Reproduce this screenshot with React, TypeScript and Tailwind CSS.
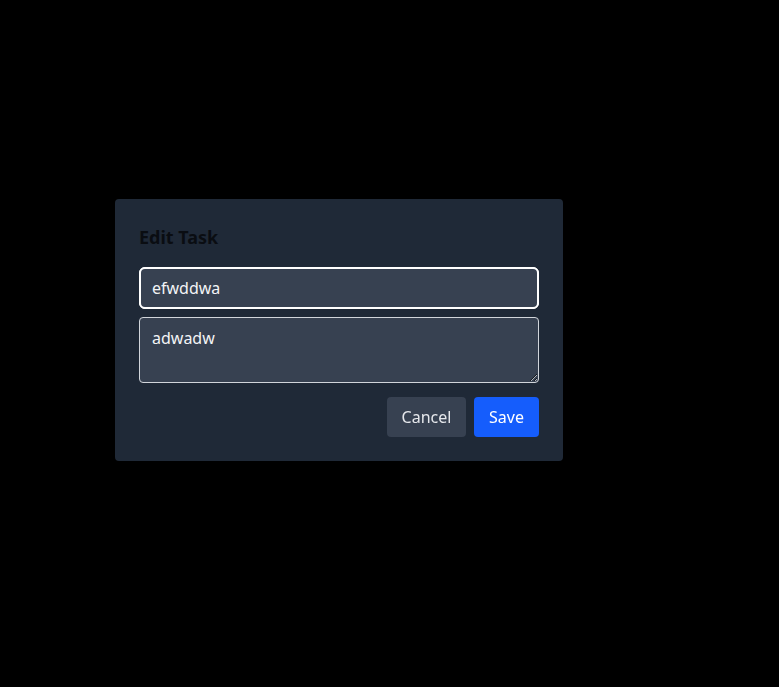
import { useState } from "react";

function EditTaskModal() {
  const [title, setTitle] = useState("efwddwa");
  const [description, setDescription] = useState("adwadw");

  return (
    <div className="w-[448px] bg-[#1f2937] rounded p-6 shadow-lg">
      <h2 className="text-lg leading-7 font-bold text-[#0a0d12] mb-4">Edit Task</h2>
      <input
        autoFocus
        value={title}
        onChange={(e) => setTitle(e.target.value)}
        className="block w-full h-[42px] px-3 rounded-md bg-[#374151] text-[#f3f4f6] border border-white outline-2 outline-white -outline-offset-2 mb-2"
      />
      <textarea
        rows={2}
        value={description}
        onChange={(e) => setDescription(e.target.value)}
        className="block w-full h-[66px] px-3 py-2 rounded bg-[#374151] text-[#f3f4f6] border border-[#d1d5db] outline-none"
      />
      <div className="flex justify-end gap-2 mt-[14px]">
        <button className="h-10 w-[79px] flex items-center justify-center rounded bg-[#374151] text-[#e5e7eb]">
          Cancel
        </button>
        <button className="h-10 w-[65px] flex items-center justify-center rounded bg-[#155dfc] text-white">
          Save
        </button>
      </div>
    </div>
  );
}

export default function App() {
  return (
    <div
      className="min-h-screen bg-black pl-[115px] pt-[199px]"
      style={{ fontFamily: '"Noto Sans", "Open Sans", sans-serif' }}
    >
      <EditTaskModal />
    </div>
  );
}
